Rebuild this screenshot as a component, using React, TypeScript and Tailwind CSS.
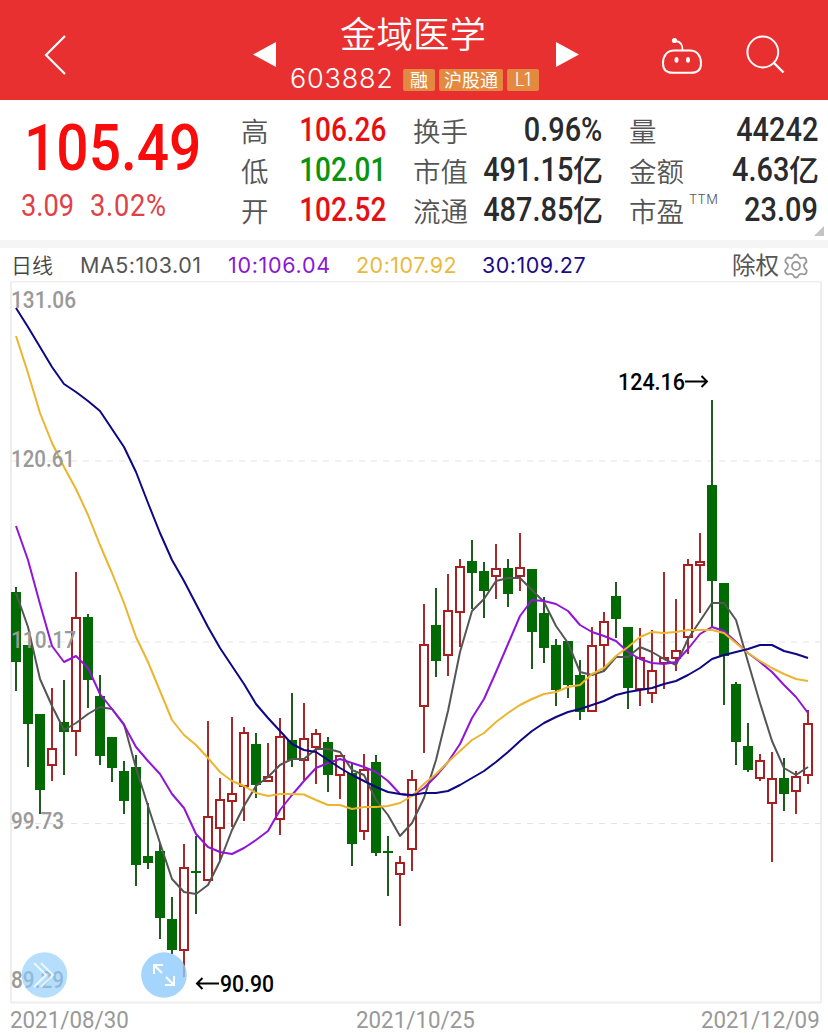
import clsx from "clsx";

type Candle = [high: number, top: number, bottom: number, low: number, up: 0 | 1];

// high, body top, body bottom, low, rising
const candles: Candle[] = [
  [587, 592, 662, 691, 0],
  [645, 645, 724, 767, 0],
  [714, 714, 790, 814, 0],
  [688, 748, 766, 781, 1],
  [680, 722, 732, 775, 0],
  [572, 617, 732, 756, 1],
  [614, 617, 680, 708, 0],
  [675, 696, 756, 765, 0],
  [737, 737, 768, 782, 0],
  [761, 771, 801, 814, 0],
  [755, 767, 865, 886, 0],
  [803, 856, 863, 869, 0],
  [843, 851, 918, 939, 0],
  [897, 919, 950, 954, 0],
  [844, 867, 951, 977, 1],
  [836, 871, 873, 914, 0],
  [721, 816, 881, 881, 1],
  [778, 799, 829, 861, 1],
  [717, 793, 802, 827, 1],
  [727, 732, 787, 821, 1],
  [733, 744, 785, 798, 0],
  [743, 776, 782, 782, 1],
  [718, 736, 820, 835, 1],
  [693, 740, 760, 767, 0],
  [703, 738, 761, 780, 1],
  [729, 733, 748, 784, 1],
  [737, 742, 775, 792, 0],
  [755, 755, 776, 799, 1],
  [763, 773, 844, 866, 0],
  [754, 769, 832, 840, 1],
  [755, 762, 853, 856, 0],
  [836, 851, 853, 896, 0],
  [856, 862, 875, 926, 1],
  [770, 779, 850, 871, 1],
  [604, 644, 707, 753, 1],
  [588, 625, 661, 677, 0],
  [574, 610, 656, 676, 1],
  [559, 566, 613, 647, 1],
  [540, 561, 573, 609, 0],
  [562, 571, 591, 618, 0],
  [544, 568, 577, 599, 1],
  [559, 568, 594, 607, 0],
  [533, 567, 577, 591, 1],
  [569, 569, 632, 669, 0],
  [597, 613, 648, 663, 0],
  [639, 645, 690, 706, 0],
  [641, 641, 685, 698, 0],
  [660, 675, 712, 720, 0],
  [627, 645, 712, 712, 1],
  [612, 621, 646, 671, 1],
  [582, 596, 619, 638, 0],
  [627, 627, 688, 709, 0],
  [628, 657, 690, 706, 1],
  [630, 670, 694, 703, 1],
  [572, 657, 664, 689, 1],
  [599, 650, 659, 671, 1],
  [559, 564, 638, 654, 1],
  [533, 561, 566, 613, 1],
  [400, 485, 581, 628, 0],
  [583, 583, 656, 705, 0],
  [682, 684, 742, 765, 0],
  [723, 746, 770, 772, 0],
  [754, 760, 779, 781, 1],
  [752, 778, 804, 862, 1],
  [758, 778, 794, 811, 0],
  [771, 776, 792, 814, 1],
  [710, 723, 776, 784, 1],
];

const averages = [
  {
    name: "MA5",
    color: "#555555",
    points: [
      593, 627, 679, 706, 730, 723, 714, 707, 709, 724, 768, 806, 843, 879, 892,
      894, 885, 861, 830, 806, 786, 777, 765, 759, 759, 749, 749, 752, 770, 775,
      800, 815, 836, 823, 798, 760, 711, 652, 611, 599, 581, 578, 578, 590, 602,
      626, 643, 672, 675, 671, 657, 657, 647, 652, 659, 665, 639, 621, 603, 603,
      620, 662, 703, 741, 768, 775, 767,
    ],
  },
  {
    name: "MA10",
    color: "#9115d8",
    points: [
      526, 560, 604, 646, 662, 656, 668, 694, 709, 725, 747, 761, 774, 794, 808,
      834, 847, 852, 854, 848, 840, 831, 810, 795, 781, 768, 763, 759, 763, 767,
      772, 781, 794, 796, 788, 776, 762, 744, 718, 699, 672, 644, 616, 600, 601,
      604, 611, 625, 632, 636, 641, 652, 659, 663, 664, 662, 649, 634, 627, 631,
      642, 653, 662, 672, 685, 697, 713,
    ],
  },
  {
    name: "MA20",
    color: "#eab62f",
    points: [
      336, 373, 413, 443, 467, 489, 515, 545, 573, 603, 637, 662, 691, 720, 735,
      745, 758, 772, 781, 786, 793, 796, 794, 794, 794.5, 800, 805, 805, 809, 807,
      807, 806, 803, 796, 784, 774, 762, 751, 740, 733, 722, 713, 705, 699, 694,
      692, 687, 685, 674, 668, 656, 647, 637, 632, 633, 632, 630, 630, 630, 633,
      643, 653, 661, 668, 674, 679, 681,
    ],
  },
  {
    name: "MA30",
    color: "#0d0784",
    points: [
      308, 327, 347, 367, 384, 392, 401, 411, 429, 447, 472, 503, 533, 560, 581,
      604, 627, 648, 666, 684, 704, 718, 731, 744, 750, 752, 760, 768, 775, 781,
      787, 792, 794, 795, 793, 793, 791, 785, 778, 771, 762, 752, 741, 731, 723,
      717, 712, 709, 705, 701, 695, 692, 690, 688, 684, 681, 675, 668, 659, 655,
      652, 649, 645, 645, 651, 654, 658,
    ],
  },
];

const axisLabels = [
  { text: "131.06", y: 308, width: 65 },
  { text: "120.61", y: 467, width: 64 },
  { text: "110.17", y: 648, width: 65 },
  { text: "99.73", y: 829, width: 53 },
  { text: "89.29", y: 988, width: 53 },
];

const quotes = [
  [
    { label: "高", value: "106.26", color: "text-[#e60f12]" },
    { label: "低", value: "102.01", color: "text-[#0a930d]" },
    { label: "开", value: "102.52", color: "text-[#e60f12]" },
  ],
  [
    { label: "换手", value: "0.96%" },
    { label: "市值", value: "491.15", unit: "亿" },
    { label: "流通", value: "487.85", unit: "亿" },
  ],
  [
    { label: "量", value: "44242" },
    { label: "金额", value: "4.63", unit: "亿" },
    { label: "市盈", value: "23.09", note: "TTM" },
  ],
];

const columnStyles = ["w-[145px]", "ml-[27px] w-[189px]", "ml-[27px] w-[189px]"];

const candleX = (index: number) => 16 + index * 12;

const Header = () => (
  <header className="flex h-[100px] bg-[#e93030] text-white">
    <svg className="mt-[34px] ml-[43px] h-[42px] w-6" viewBox="0 0 24 42" fill="none">
      <path d="M22 2 L3 21 L22 40" stroke="currentColor" strokeWidth="2.2" />
    </svg>
    <svg className="mt-[41px] ml-[186px] h-[27px] w-[23px]" viewBox="0 0 23 27">
      <path d="M0 13.5 L23 1 V26 Z" fill="currentColor" />
    </svg>
    <div className="ml-[14px] flex w-[249px] flex-col">
      <h1 className="mt-[10px] h-[50px] pl-[50px] text-[36.5px] leading-[46px] font-[350] whitespace-nowrap">
        金域医学
      </h1>
      <div className="mt-[5px] flex h-7 w-full items-center">
        <span className="w-[113px] font-[Inter] text-[27px] leading-7 font-light tracking-[0.8px]">
          603882
        </span>
        <div className="mt-px flex gap-1 text-[18px] leading-[20px]">
          <span className="h-[22px] w-8 rounded-xs bg-[#e48a40] text-center">融</span>
          <span className="h-[22px] w-16 rounded-xs bg-[#e48a40] text-center whitespace-nowrap">
            沪股通
          </span>
          <span className="h-[22px] w-8 rounded-xs bg-[#e48a40] text-center font-[Inter] leading-[22px] font-light">
            L1
          </span>
        </div>
      </div>
    </div>
    <svg className="mt-[41px] ml-[17px] h-[27px] w-[23px]" viewBox="0 0 23 27">
      <path d="M23 13.5 L0 1 V26 Z" fill="currentColor" />
    </svg>
    <svg className="mt-9 ml-[82px] h-10 w-[42px]" viewBox="0 0 42 40" fill="none">
      <path
        d="M13 14.5 H29 C36 14.5 40 20 40 27.5 C40 34 36.5 36.8 30 36.8 H12 C5.5 36.8 2 34 2 27.5 C2 20 6 14.5 13 14.5 Z"
        stroke="currentColor"
        strokeWidth="2"
      />
      <path d="M21.5 14.5 C22 8.5 19.5 5.5 14.5 4.8" stroke="currentColor" strokeWidth="1.8" />
      <circle cx="13.5" cy="4.5" r="2.6" fill="currentColor" />
      <ellipse cx="15.5" cy="23.8" rx="2" ry="2.9" fill="currentColor" />
      <ellipse cx="27" cy="23.8" rx="2" ry="2.9" fill="currentColor" />
    </svg>
    <svg className="mt-[34px] ml-[42px] h-10 w-10" viewBox="0 0 40 40" fill="none" stroke="currentColor">
      <circle cx="17.8" cy="18" r="15.4" strokeWidth="2" />
      <path d="M28.5 28.5 L38.5 38.5" strokeWidth="2.4" />
    </svg>
  </header>
);

const QuotePanel = () => (
  <section className="relative flex h-[140px]">
    <div className="w-[241px]">
      <div className="mt-[13px] ml-6 h-[72px] w-[200px] origin-left scale-x-[0.875] font-[Roboto] text-[65px] leading-[71px] font-medium text-[#f90c0c]">
        105.49
      </div>
      <div className="ml-[21px] flex h-10 w-[180px] origin-left scale-x-[0.88] gap-[18px] font-[Roboto] text-[31px] leading-[42px] font-[450] text-[#e04147]">
        <span>3.09</span>
        <span className="tracking-[0.8px]">3.02%</span>
      </div>
    </div>
    {quotes.map((column, i) => (
      <div key={i} className={clsx("pt-[10px]", columnStyles[i])}>
        {column.map((item) => (
          <Quote key={item.label} {...item} />
        ))}
      </div>
    ))}
    <svg className="absolute right-1 bottom-1 h-[10px] w-[10px]" viewBox="0 0 10 10">
      <path d="M10 0 V10 H0 Z" fill="#c4c4c4" />
    </svg>
  </section>
);

interface QuoteProps {
  label: string;
  value: string;
  color?: string;
  unit?: string;
  note?: string;
}

const Quote = ({ label, value, color = "text-[#292b2d]", unit, note }: QuoteProps) => (
  <div className="flex h-10 justify-between whitespace-nowrap">
    <span className="flex text-[27.5px] leading-[40px] font-[350] text-[#555]">
      {label}
      {note && (
        <sup className="top-0 ml-[5px] h-4 pt-px font-[Inter] text-[13px] leading-4 font-light tracking-[0.3px]">
          {note}
        </sup>
      )}
    </span>
    <span className={clsx("flex w-0 justify-end text-right font-medium", color)}>
      <span
        className={clsx(
          "origin-right font-[Roboto] text-[32.5px] leading-[40px]",
          value.includes(".") && value.length === 6 && !unit
            ? "scale-x-[0.86]"
            : "scale-x-[0.89]",
        )}
      >
        {value}
      </span>
      {unit && <span className="-mr-px text-[30px] leading-[37px]">{unit}</span>}
    </span>
  </div>
);

const Legend = () => (
  <div className="flex h-[33px] items-center font-[Inter] text-[21.5px] leading-[35px] tracking-[0.5px]">
    <span className="ml-[11px] w-[69px] font-['Noto_Sans_CJK_SC'] text-[21px] leading-[33px] font-[350] tracking-normal text-[#444]">
      日线
    </span>
    <span className="mt-[2px] w-[148px] text-[#555]">MA5:103.01</span>
    <span className="mt-[2px] w-[128px] tracking-[0.7px] text-[#8a18cf]">10:106.04</span>
    <span className="mt-[2px] w-[126px] text-[#e9b93b]">20:107.92</span>
    <span className="mt-[2px] w-[250px] text-[#1a0b85]">30:109.27</span>
    <span className="w-[51px] font-['Noto_Sans_CJK_SC'] text-[23.5px] leading-[31px] tracking-normal whitespace-nowrap text-[#555]">
      除权
    </span>
    <svg
      className="mt-[3px] h-[26px] w-[26px]"
      viewBox="0 0 26 26"
      fill="none"
      stroke="#999"
      strokeWidth="1.8"
      strokeLinejoin="round"
    >
      <path d="M10.5 3.5 Q11 1.5 13 1.5 T15.5 3.5 Q16.5 5.800 19 5 Q21.5 4 22.5 5.5 T23.5 9 Q21 11 21 13 T23.5 17 Q24 18.5 23 20.2 T19.5 21 Q16.5 20.2 15.5 22.5 Q15 24.5 13 24.5 T10.5 22.5 Q9.5 20.2 6.5 21 Q4.5 22 3 20.2 T2.5 17 Q5 15 5 13 T2.5 9 Q2 7.2 3.5 5.5 T7 5 Q9.5 5.800 10.5 3.5 Z" />
      <circle cx="13" cy="13" r="4" />
    </svg>
  </div>
);

const CandleShape = ({ x, candle }: { x: number; candle: Candle }) => {
  const [high, top, bottom, low, up] = candle;

  if (!up) {
    return (
      <g fill="#026a02">
        <rect x={x - 1} y={high} width={2} height={low - high} fill="#1f5a1f" />
        <rect x={x - 5} y={top} width={10} height={bottom - top} />
      </g>
    );
  }

  return (
    <g fill="#a52a2a">
      <rect x={x - 1} y={high} width={2} height={top - high} />
      <rect x={x - 1} y={bottom} width={2} height={low - bottom} />
      <rect
        x={x - 4}
        y={top + 1}
        width={8}
        height={bottom - top - 2}
        fill="white"
        stroke="#a91e1e"
        strokeWidth={2}
      />
    </g>
  );
};

const Chart = () => (
  <svg className="block h-[723px] w-[828px]" viewBox="0 281 828 723">
    <rect x="11" y="281.5" width="810" height="721" fill="none" stroke="#eeeeee" strokeWidth="2" />
    {[461, 642, 823.5].map((y) => (
      <path key={y} d={`M11 ${y} H821`} stroke="#e4e4e4" strokeWidth="1.2" strokeDasharray="6 6" />
    ))}
    {candles.map((candle, i) => (
      <CandleShape key={i} x={candleX(i)} candle={candle} />
    ))}
    {averages.map(({ name, color, points }) => (
      <polyline
        key={name}
        points={points.map((y, i) => `${candleX(i)},${y}`).join(" ")}
        fill="none"
        stroke={color}
        strokeWidth="2"
        strokeLinejoin="round"
      />
    ))}
    <g className="font-[Roboto] text-[24px] font-[480]" fill="#999">
      {axisLabels.map(({ text, y, width }) => (
        <text key={text} x="11" y={y} textLength={width} lengthAdjust="spacingAndGlyphs">
          {text}
        </text>
      ))}
    </g>
    <g className="font-[Roboto] text-[24px] font-medium">
      <text x="618" y="390" textLength="67" lengthAdjust="spacingAndGlyphs">
        124.16
      </text>
      <text x="220" y="992" textLength="54" lengthAdjust="spacingAndGlyphs">
        90.90
      </text>
    </g>
    <g fill="none" stroke="black" strokeWidth="2">
      <path d="M685 381.5 H707 M701.5 376 L707 381.5 L701.5 387" />
      <path d="M219 983.5 H197 M202.5 978 L197 983.5 L202.5 989" />
    </g>
    <g fill="#8ecbfb">
      <circle cx="44.5" cy="975" r="22.8" fillOpacity="0.65" />
      <circle cx="164" cy="975" r="22.8" fillOpacity="0.8" />
    </g>
    <g fill="none" stroke="white" strokeWidth="2">
      <path d="M34 963 L46 975 L34 987 M41 963 L53 975 L41 987" strokeOpacity="0.75" />
      <path d="M154 974 V965 H163 M154 965 L162 973 M174 976 V985 H165 M174 985 L166 977" />
    </g>
  </svg>
);

const App = () => (
  <div className="h-[1033px] w-[828px] overflow-hidden bg-white font-['Noto_Sans_CJK_SC',sans-serif]">
    <Header />
    <QuotePanel />
    <div className="h-2 bg-[#f5f5f5]" />
    <Legend />
    <Chart />
    <div className="flex h-[29px] justify-between pr-2 pl-[10px] font-[Roboto] text-[24px] leading-[32px] font-[450] text-[#999]">
      <span className="w-0 origin-left">
        <span className="block w-max origin-left scale-x-[0.93]">2021/08/30</span>
      </span>
      <span className="block w-[119px]">
        <span className="block w-max origin-left scale-x-[0.93]">2021/10/25</span>
      </span>
      <span className="flex w-0 justify-end">
        <span className="block w-max origin-right scale-x-[0.93]">2021/12/09</span>
      </span>
    </div>
  </div>
);

export default App;
